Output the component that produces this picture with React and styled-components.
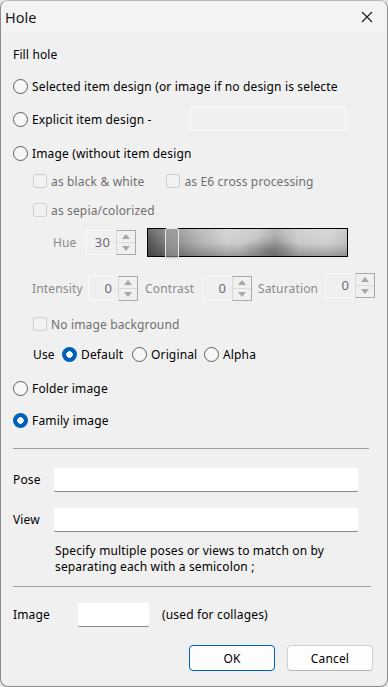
import React from "react";
import styled, { createGlobalStyle, css } from "styled-components";

const Global = createGlobalStyle`
  html, body {
    margin: 0;
    padding: 0;
    background: #e6e6e6;
  }
  body {
    font-family: "Noto Sans", "Open Sans", sans-serif;
    font-size: 12px;
    letter-spacing: 0.15px;
    color: #000;
  }
`;

export default function App() {
  return (
    <>
      <Global />
      <Window>
        <TitleBar>
          <Title>Hole</Title>
          <CloseIcon viewBox="0 0 12 12">
            <path d="M1 1 L11 11 M11 1 L1 11" stroke="#1a1a1a" strokeWidth="1.1" />
          </CloseIcon>
        </TitleBar>
        <Body>
          <Row $h={24}>Fill hole</Row>
          <Row $h={24} $mt={8}>
            <Radio />
            <Label>Selected item design (or image if no design is selecte</Label>
          </Row>
          <Row $h={24} $mt={9}>
            <Radio />
            <Label>Explicit item design -</Label>
            <DisabledBox />
          </Row>
          <Row $h={24} $mt={10}>
            <Radio />
            <Label>Image (without item design</Label>
          </Row>
          <Row $h={24} $mt={4} $indent={20}>
            <Check />
            <Label $dim>as black &amp; white</Label>
            <Check $ml={22} />
            <Label $dim>as E6 cross processing</Label>
          </Row>
          <Row $h={24} $mt={5} $indent={20}>
            <Check />
            <Label $dim>as sepia/colorized</Label>
          </Row>
          <Row $h={30} $mt={5} $indent={40}>
            <FieldLabel $w={33}>Hue</FieldLabel>
            <Spin value="30" />
            <HueSlider>
              <Thumb />
            </HueSlider>
          </Row>
          <Row $h={26} $mt={18} $indent={19}>
            <FieldLabel $w={56}>Intensity</FieldLabel>
            <Spin value="0" />
            <FieldLabel $w={57} $ml={7}>Contrast</FieldLabel>
            <Spin value="0" />
            <FieldLabel $w={67} $ml={6}>Saturation</FieldLabel>
            <Spin value="0" $up={3} />
          </Row>
          <Row $h={24} $mt={11} $indent={20}>
            <Check />
            <Label $dim>No image background</Label>
          </Row>
          <Row $h={24} $mt={6} $indent={20}>
            <Label $gap={0} $w={29}>Use</Label>
            <Radio $on />
            <Label $w={51}>Default</Label>
            <Radio />
            <Label $w={53}>Original</Label>
            <Radio />
            <Label>Alpha</Label>
          </Row>
          <Row $h={24} $mt={10}>
            <Radio />
            <Label>Folder image</Label>
          </Row>
          <Row $h={24} $mt={8}>
            <Radio $on />
            <Label>Family image</Label>
          </Row>
          <Separator $mt={16} $w={356} />
          <Row $h={26} $mt={17}>
            <FieldLabel $w={40} $dark>Pose</FieldLabel>
            <TextInput $w={306} />
          </Row>
          <Row $h={26} $mt={14}>
            <FieldLabel $w={40} $dark>View</FieldLabel>
            <TextInput $w={306} />
          </Row>
          <Help>
            Specify multiple poses or views to match on by
            <br />
            separating each with a semicolon ;
          </Help>
          <Separator $mt={11} $w={358} />
          <Row $h={26} $mt={14}>
            <FieldLabel $w={64} $dark>Image</FieldLabel>
            <TextInput $w={73} />
            <Label $gap={12}>(used for collages)</Label>
          </Row>
          <Buttons>
            <Button $primary>OK</Button>
            <Button>Cancel</Button>
          </Buttons>
        </Body>
      </Window>
    </>
  );
}

function Radio({ $on }) {
  return <RadioDot $on={$on} />;
}

function Spin({ value, $up }) {
  return (
    <SpinBox style={$up ? { marginTop: -$up * 2 } : undefined}>
      <SpinValue>{value}</SpinValue>
      <SpinButtons>
        <SpinHalf>
          <Tri viewBox="0 0 8 5">
            <path d="M0 5 L4 0 L8 5 Z" fill="#a8a8a8" />
          </Tri>
        </SpinHalf>
        <SpinHalf>
          <Tri viewBox="0 0 8 5">
            <path d="M0 0 L4 5 L8 0 Z" fill="#a8a8a8" />
          </Tri>
        </SpinHalf>
      </SpinButtons>
    </SpinBox>
  );
}

const Window = styled.div`
  width: 388px;
  height: 687px;
  box-sizing: border-box;
  background: #f0f0f0;
  border: 1px solid #8c8c8c;
  border-top-color: #b8b8b8;
  border-radius: 8px;
  overflow: hidden;
  display: flex;
  flex-direction: column;
`;

const TitleBar = styled.div`
  height: 31px;
  background: #f3f3f3;
  display: flex;
  align-items: center;
  justify-content: space-between;
  padding: 0 14px 0 4px;
`;

const Title = styled.div`
  font-size: 14.5px;
  letter-spacing: 0;
  color: #1a1a1a;
  margin-top: 1px;
`;

const CloseIcon = styled.svg`
  width: 12px;
  height: 12px;
`;

const Body = styled.div`
  display: flex;
  flex-direction: column;
  padding: 10px 0 0 12px;
`;

const Row = styled.div`
  height: ${({ $h }) => $h}px;
  margin-top: ${({ $mt }) => $mt || 0}px;
  padding-left: ${({ $indent }) => $indent || 0}px;
  display: flex;
  align-items: center;
  white-space: nowrap;
`;

const Label = styled.span`
  margin-left: ${({ $gap }) => ($gap === undefined ? 4 : $gap)}px;
  width: ${({ $w }) => ($w ? `${$w}px` : "auto")};
  color: ${({ $dim }) => ($dim ? "#6f6f6f" : "#000")};
`;

const FieldLabel = styled.span`
  width: ${({ $w }) => $w}px;
  margin-left: ${({ $ml }) => $ml || 0}px;
  flex-shrink: 0;
  color: ${({ $dark }) => ($dark ? "#000" : "#8a8a8a")};
`;

const RadioDot = styled.span`
  width: 15px;
  height: 15px;
  box-sizing: border-box;
  border-radius: 50%;
  flex-shrink: 0;
  ${({ $on }) =>
    $on
      ? css`
          background: radial-gradient(circle, #fff 0 3px, #005fb8 3.5px);
        `
      : css`
          background: #f7f7f7;
          border: 1px solid #5f5f5f;
        `}
`;

const Check = styled.span`
  width: 14px;
  height: 14px;
  box-sizing: border-box;
  border: 1px solid #cdcdcd;
  border-radius: 3px;
  background: #f2f2f2;
  flex-shrink: 0;
  margin-left: ${({ $ml }) => $ml || 0}px;
`;

const DisabledBox = styled.span`
  width: 156px;
  height: 23px;
  box-sizing: border-box;
  border: 1px solid #fbfbfb;
  background: #efefef;
  margin-left: 38px;
  margin-top: -2px;
`;

const SpinBox = styled.div`
  width: 50px;
  height: 25px;
  box-sizing: border-box;
  display: flex;
  flex-shrink: 0;
`;

const SpinValue = styled.div`
  flex: 1;
  border: 1px solid #f9f9f9;
  border-right: none;
  display: flex;
  align-items: center;
  justify-content: flex-end;
  padding-right: 6px;
  font-size: 13px;
  color: #6a6a7a;
`;

const SpinButtons = styled.div`
  width: 20px;
  display: flex;
  flex-direction: column;
  border: 1px solid #a9a9a9;
  border-left-color: #d8d8d8;
  box-sizing: border-box;
`;

const SpinHalf = styled.div`
  flex: 1;
  display: flex;
  align-items: center;
  justify-content: center;
  & + & {
    border-top: 1px solid #dcdcdc;
  }
`;

const Tri = styled.svg`
  width: 8px;
  height: 5px;
`;

const HueSlider = styled.div`
  position: relative;
  margin-left: 11px;
  width: 201px;
  height: 29px;
  box-sizing: border-box;
  border: 1px solid #000;
  background:
    linear-gradient(180deg, rgba(255, 255, 255, 0.15) 0%, rgba(0, 0, 0, 0) 50%, rgba(0, 0, 0, 0.25) 100%),
    radial-gradient(ellipse 30px 16px at 122px 22px, rgba(70, 70, 70, 0.35), rgba(70, 70, 70, 0)),
    linear-gradient(90deg, #555 0%, #8a8a8a 12%, #b0b0b0 25%, #cfcfcf 40%, #c4c4c4 55%, #a8a8a8 64%, #c8c8c8 75%, #d2d2d2 90%, #c0c0c0 100%);
`;

const Thumb = styled.span`
  position: absolute;
  left: 17px;
  top: -1px;
  width: 14px;
  height: 31px;
  box-sizing: border-box;
  border: 1px solid #e8e8e8;
  border-radius: 2px;
  background: rgba(160, 160, 160, 0.55);
`;

const Separator = styled.div`
  margin-top: ${({ $mt }) => $mt}px;
  width: ${({ $w }) => $w}px;
  height: 1px;
  background: #a0a0a0;
`;

const TextInput = styled.div`
  width: ${({ $w }) => $w}px;
  height: 25px;
  box-sizing: border-box;
  background: #fff;
  border: 1px solid #f2f2f2;
  border-bottom: 1px solid #8a8a8a;
  border-radius: 3px;
  flex-shrink: 0;
`;

const Help = styled.div`
  margin-top: 11px;
  padding-left: 42px;
  line-height: 16px;
`;

const Buttons = styled.div`
  margin-top: 18px;
  display: flex;
  justify-content: flex-end;
  gap: 12px;
  padding-right: 14px;
`;

const Button = styled.button`
  width: 86px;
  height: 26px;
  box-sizing: border-box;
  font-family: inherit;
  font-size: 12px;
  letter-spacing: inherit;
  color: #000;
  background: #fdfdfd;
  border-radius: 4px;
  border: 1px solid ${({ $primary }) => ($primary ? "#005fb8" : "#d0d0d0")};
  border-bottom-color: ${({ $primary }) => ($primary ? "#005fb8" : "#b5b5b5")};
  padding: 0;
`;
